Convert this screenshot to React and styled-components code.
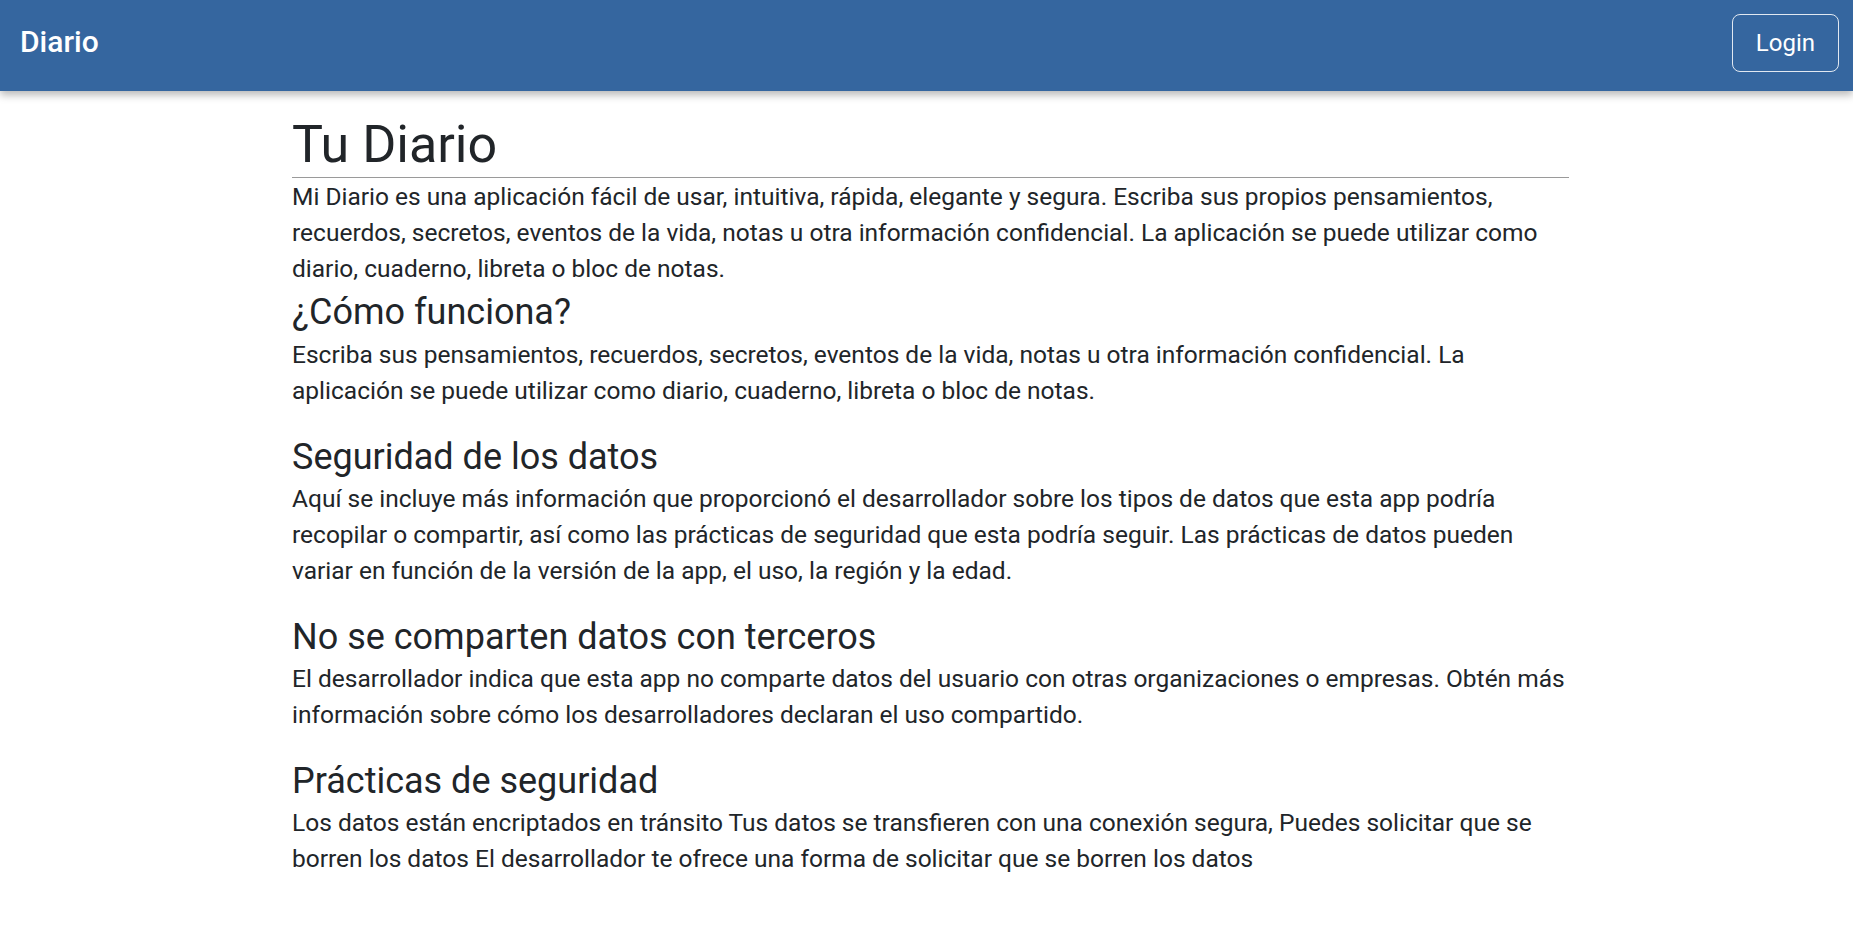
import React from "react";
import styled, { createGlobalStyle } from "styled-components";

const GlobalStyle = createGlobalStyle`
  body {
    margin: 0;
    background: #ffffff;
    font-family: Roboto, "Liberation Sans", sans-serif;
    color: #212529;
  }
`;

const Navbar = styled.header`
  height: 91px;
  display: flex;
  align-items: center;
  justify-content: space-between;
  padding: 0 14px 0 20px;
  background: #35669f;
  box-shadow: 0 4px 8px rgba(0, 0, 0, 0.28);
`;

const Brand = styled.a`
  font-size: 30px;
  font-weight: 500;
  color: #ffffff;
  text-decoration: none;
  margin-top: -8px;
`;

const LoginButton = styled.button`
  font-family: Roboto, "Liberation Sans", sans-serif;
  font-size: 24px;
  line-height: 36px;
  padding: 10px 23px;
  color: #ffffff;
  background: transparent;
  border: 1px solid rgba(255, 255, 255, 0.85);
  border-radius: 8px;
  cursor: pointer;
  margin-top: -6px;
`;

const Main = styled.main`
  width: 1277px;
  margin-left: 292px;
  padding: 23px 0 40px;
`;

const Title = styled.h1`
  margin: 0;
  font-size: 52px;
  font-weight: 400;
  line-height: 1.2;
`;

const Rule = styled.hr`
  margin: 1px 0 1px;
  border: 0;
  border-top: 1px solid #9a9a9a;
`;

const Heading = styled.h2`
  margin: 4px 0 2px;
  font-size: 36px;
  font-weight: 400;
  line-height: 1.2;
`;

const Text = styled.p`
  margin: 0 0 ${(p) => (p.$intro ? "0" : "27px")};
  font-size: 24.5px;
  line-height: 36px;
`;

const sections = [
  {
    title: "¿Cómo funciona?",
    text: "Escriba sus pensamientos, recuerdos, secretos, eventos de la vida, notas u otra información confidencial. La aplicación se puede utilizar como diario, cuaderno, libreta o bloc de notas.",
  },
  {
    title: "Seguridad de los datos",
    text: "Aquí se incluye más información que proporcionó el desarrollador sobre los tipos de datos que esta app podría recopilar o compartir, así como las prácticas de seguridad que esta podría seguir. Las prácticas de datos pueden variar en función de la versión de la app, el uso, la región y la edad.",
  },
  {
    title: "No se comparten datos con terceros",
    text: "El desarrollador indica que esta app no comparte datos del usuario con otras organizaciones o empresas. Obtén más información sobre cómo los desarrolladores declaran el uso compartido.",
  },
  {
    title: "Prácticas de seguridad",
    text: "Los datos están encriptados en tránsito Tus datos se transfieren con una conexión segura, Puedes solicitar que se borren los datos El desarrollador te ofrece una forma de solicitar que se borren los datos",
  },
];

const App = () => {
  return (
    <>
      <GlobalStyle />
      <Navbar>
        <Brand href="#">Diario</Brand>
        <LoginButton>Login</LoginButton>
      </Navbar>
      <Main>
        <Title>Tu Diario</Title>
        <Rule />
        <Text $intro>
          Mi Diario es una aplicación fácil de usar, intuitiva, rápida, elegante
          y segura. Escriba sus propios pensamientos, recuerdos, secretos,
          eventos de la vida, notas u otra información confidencial. La
          aplicación se puede utilizar como diario, cuaderno, libreta o bloc de
          notas.
        </Text>
        {sections.map((s) => (
          <section key={s.title}>
            <Heading>{s.title}</Heading>
            <Text>{s.text}</Text>
          </section>
        ))}
      </Main>
    </>
  );
};

export default App;
